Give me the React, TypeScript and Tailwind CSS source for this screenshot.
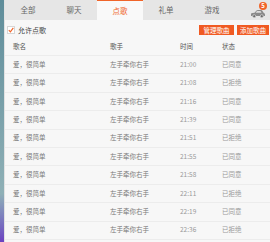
const tabs = ['全部', '聊天', '点歌', '礼单', '游戏'];

const rows: [string, string, string, string][] = [
  ['爱，很简单', '左手牵你右手', '21:00', '已同意'],
  ['爱，很简单', '左手牵你右手', '21:08', '已拒绝'],
  ['爱，很简单', '左手牵你右手', '21:16', '已同意'],
  ['爱，很简单', '左手牵你右手', '21:39', '已同意'],
  ['爱，很简单', '左手牵你右手', '21:51', '已拒绝'],
  ['爱，很简单', '左手牵你右手', '21:55', '已同意'],
  ['爱，很简单', '左手牵你右手', '21:58', '已同意'],
  ['爱，很简单', '左手牵你右手', '22:11', '已拒绝'],
  ['爱，很简单', '左手牵你右手', '22:19', '已同意'],
  ['爱，很简单', '左手牵你右手', '22:36', '已拒绝'],
];

function CarIcon() {
  return (
    <svg width="16" height="9" viewBox="0 0 16 9">
      <path d="M1 7 L1 5 Q1 4 2.5 4 L4.5 3.8 L6.5 1.5 Q7 1 8 1 L11 1 Q12 1 12.5 2 L13.8 4 Q15 4.3 15 5.5 L15 7 Z" fill="#8a8a8a" />
      <path d="M7 2 L10.5 2 L11.5 3.8 L5.6 3.8 Z" fill="#dcdcdc" />
      <circle cx="4.2" cy="7.2" r="1.5" fill="#6a6a6a" stroke="#e8e8e8" strokeWidth="0.6" />
      <circle cx="11.8" cy="7.2" r="1.5" fill="#6a6a6a" stroke="#e8e8e8" strokeWidth="0.6" />
    </svg>
  );
}

export default function App() {
  return (
    <div
      className="flex w-[270px] h-[242px] overflow-hidden bg-[#f7f7f7]"
      style={{ fontFamily: '"Noto Sans CJK SC", "Noto Sans", sans-serif' }}
    >
      <div className="w-[4px] shrink-0 bg-gradient-to-b from-[#5f8d9a] via-[#8fb0b6] via-80% to-[#6b3fc0]" />
      <div className="flex-1 flex flex-col border-l border-[#e2e2e2] min-w-0">
        {/* tab bar */}
        <div className="flex h-[20px] bg-[#e6e6e6] shrink-0">
          {tabs.map((t) => {
            const active = t === '点歌';
            return (
              <div
                key={t}
                className={
                  active
                    ? 'w-[46px] flex items-center justify-center text-[7.5px] text-[#f0652a] bg-[#f9f9f9] border-t-[1.5px] border-[#f0652a]'
                    : 'w-[46px] flex items-center justify-center text-[7.5px] text-[#666]'
                }
              >
                {t}
              </div>
            );
          })}
          <div className="flex-1 relative flex items-end justify-end pr-[4px] pb-[2px]">
            <CarIcon />
            <span className="absolute right-[3px] top-[2px] w-[8px] h-[8px] rounded-full bg-[#f0652a] text-white text-[6px] leading-[8px] text-center font-bold">
              5
            </span>
          </div>
        </div>

        {/* allow row */}
        <div className="flex items-center h-[16px] mt-[2px] shrink-0">
          <div className="ml-[2px] w-[8px] h-[8px] bg-white border border-[#d6d6d6] flex items-center justify-center">
            <svg width="6" height="6" viewBox="0 0 6 6">
              <path d="M0.8 3.2 L2.4 4.8 L5.3 0.9" fill="none" stroke="#f0652a" strokeWidth="1.2" />
            </svg>
          </div>
          <span className="ml-[3px] text-[7px] text-[#444]">允许点歌</span>
          <div className="ml-auto mr-[1px] flex gap-[3px]">
            <button className="h-[10px] w-[35px] bg-[#f05a22] text-white text-[6.5px] leading-[10px]">管理歌曲</button>
            <button className="h-[10px] w-[32px] bg-[#f05a22] text-white text-[6.5px] leading-[10px]">添加歌曲</button>
          </div>
        </div>

        {/* header */}
        <div className="grid grid-cols-[97px_70px_42px_1fr] items-center h-[18px] pl-[8px] text-[6.5px] text-[#555] border-b border-[#ececec] shrink-0">
          <span>歌名</span>
          <span>歌手</span>
          <span>时间</span>
          <span>状态</span>
        </div>

        {/* rows */}
        <div className="flex flex-col">
          {rows.map((r, i) => (
            <div
              key={i}
              className="grid grid-cols-[97px_70px_42px_1fr] items-center h-[18.4px] shrink-0 pl-[8px] text-[6.5px] text-[#777] border-b border-[#ececec]"
            >
              <span>{r[0]}</span>
              <span>{r[1]}</span>
              <span className="text-[#999]">{r[2]}</span>
              <span className="text-[#999]">{r[3]}</span>
            </div>
          ))}
        </div>
      </div>
    </div>
  );
}
